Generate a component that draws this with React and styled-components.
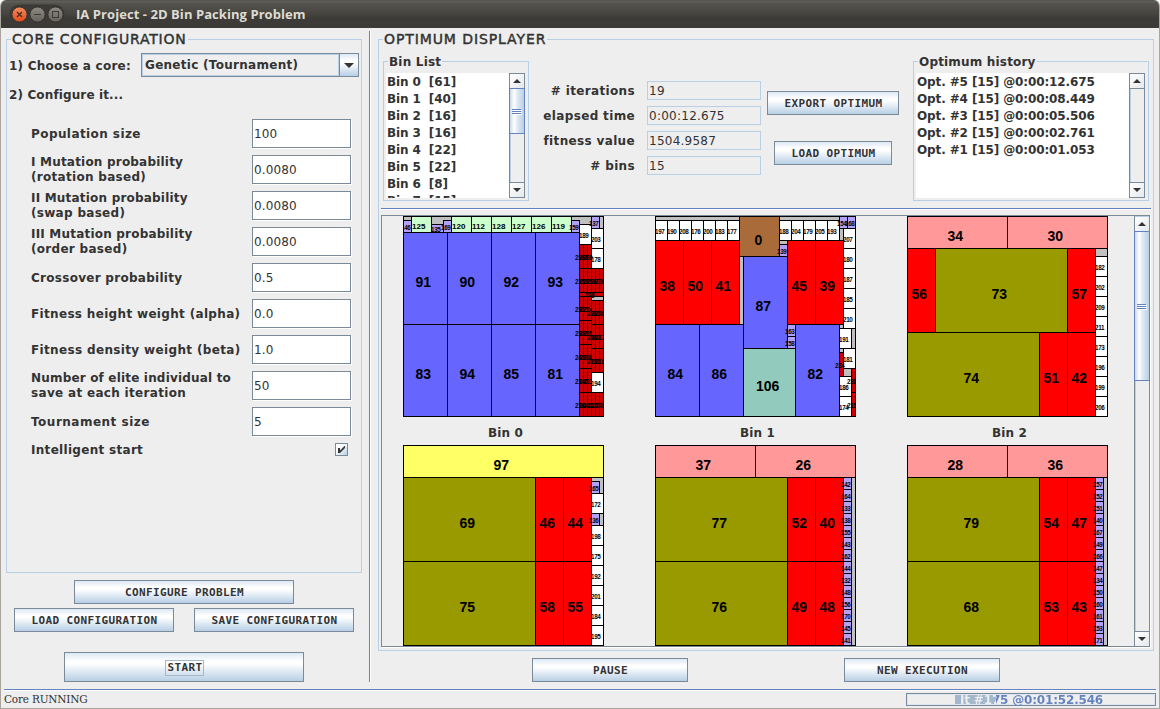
import React from "react";
import styled, { createGlobalStyle, css } from "styled-components";

const C = {
  bg: "#eeeeee",
  ink: "#333333",
  group: "#b8cfe5",
  edge: "#7a8a99",
  blue: "#6382bf",
};

const Global = createGlobalStyle`
  *, *::before, *::after { box-sizing: border-box; }
  html, body { margin: 0; padding: 0; background: #fff; }
  body { font-family: "DejaVu Sans", sans-serif; font-size: 12px; color: ${C.ink}; overflow: hidden; }
`;

const Window = styled.div`
  width: 1160px;
  height: 709px;
  display: flex;
  flex-direction: column;
  background: ${C.bg};
  border: 1px solid #aaa69f;
  border-top: 0;
  border-radius: 6px 6px 0 0;
  overflow: hidden;
`;

const TitleBar = styled.header`
  height: 28px;
  flex: none;
  margin: 0 -1px;
  padding-left: 9px;
  display: flex;
  align-items: center;
  background: linear-gradient(#4a4944 0, #63625c 1px, #55544e 3px, #45443f 14px, #3c3b37 18px, #3c3b37 100%);
`;

const Title = styled.h1`
  margin: 0 0 1px 10px;
  font: bold 13px/18px "Open Sans", "Noto Sans", sans-serif;
  letter-spacing: 0.06px;
  color: #dfdbd2;
`;

const Body = styled.div`
  display: flex;
  height: 661px;
  flex: none;
`;

const LeftPane = styled.section`
  width: 368px;
  padding: 4px 7px 0 5px;
  display: flex;
  flex-direction: column;
`;

const Divider = styled.div`
  width: 2px;
  height: 651px;
  margin-top: 3px;
  background: ${C.blue};
  border-right: 1px solid #fff;
`;

const RightPane = styled.section`
  padding: 4px 0 0 7px;
  flex: 1;
`;

const Group = styled.fieldset`
  margin: 0;
  padding: 0;
  min-width: 0;
  border: 1px solid ${C.group};
  width: ${(p) => p.$w}px;
  height: ${(p) => p.$h}px;
`;

const Legend = styled.legend`
  height: 15px;
  line-height: 16px;
  margin-left: 4px;
  padding: 0 1px;
  white-space: nowrap;
  letter-spacing: ${(p) => p.$ls || "0.2px"};
  ${(p) =>
    p.$big
      ? css`
          font-size: 14px;
          line-height: 15px;
          -webkit-text-stroke: 0.45px ${C.ink};
        `
      : css`
          font-size: 12px;
          font-weight: bold;
        `}
`;

const Label = styled.span`
  font-weight: bold;
  font-size: 12px;
  line-height: 15px;
  padding-top: 2px;
  letter-spacing: ${(p) => (p.$ls === undefined ? 0.35 : p.$ls)}px;
  white-space: nowrap;
`;

const LabelLines = styled.div`
  display: flex;
  flex-direction: column;

  ${Label} {
    padding-top: 0;
  }

  ${Label}:only-child {
    padding-top: 2px;
  }
`;

const CoreRow = styled.div`
  display: flex;
  align-items: center;
  margin-top: 6px;
  padding-left: 2px;
  height: 24px;
`;

const Combo = styled.div`
  display: flex;
  width: 218px;
  height: 24px;
  margin-left: auto;
  margin-right: 2px;
  border: 1px solid ${C.edge};
`;

const ComboText = styled.div`
  flex: 1;
  padding-left: 2px;
  border: 1px solid ${C.group};
  line-height: 21px;
  font-weight: bold;
  letter-spacing: 0.28px;
`;

const ComboArrow = styled.div`
  width: 19px;
  border-left: 1px solid ${C.edge};
  display: flex;
  align-items: center;
  justify-content: center;
  background: linear-gradient(#dde8f3, #ffffff 30%, #ffffff 40%, #b8cfe5);
`;

const StepLine = styled.div`
  margin: 9px 0 0 2px;
  height: 16px;
  display: flex;
`;

const Form = styled.div`
  margin: 17px 10px 0 24px;
  display: flex;
  flex-direction: column;
  gap: 7px;
`;

const FormRow = styled.div`
  display: flex;
  align-items: center;
  justify-content: space-between;
  height: ${(p) => (p.$short ? 13 : 29)}px;
`;

const Field = styled.div`
  width: 99px;
  height: 29px;
  padding-left: 1px;
  background: #fff;
  border: 1px solid ${C.edge};
  box-shadow: 1px 1px 0 #fff;
  line-height: 29px;
  letter-spacing: 0.15px;
`;

const Check = styled.div`
  width: 13px;
  height: 13px;
  margin-right: 3px;
  border: 1px solid ${C.edge};
  background: linear-gradient(135deg, #fff 30%, #b8cfe5);
`;

const Button = styled.button`
  appearance: none;
  padding: 2px 0 0 1px;
  margin: 0;
  flex: none;
  border-radius: 0;
  width: ${(p) => p.$w}px;
  height: ${(p) => p.$h || 24}px;
  border: 1px solid ${C.edge};
  background: linear-gradient(#dde8f3, #ffffff 30%, #ffffff 38%, #b8cfe5);
  color: ${C.ink};
  font: bold 11px/14px "DejaVu Sans Mono", monospace;
  letter-spacing: 0.38px;
  display: flex;
  align-items: center;
  justify-content: center;
`;

const Focus = styled.span`
  border: 1px solid #a3b8cc;
  margin-top: -1px;
  padding: 0 0 0 1px;
`;

const ButtonRow = styled.div`
  display: flex;
  justify-content: center;
  gap: ${(p) => p.$gap || 20}px;
  margin-top: ${(p) => p.$mt}px;
  margin-right: ${(p) => p.$mr || 0}px;
`;

const TopArea = styled.div`
  display: flex;
  height: 161px;
  padding: 7px 0 0 4px;
`;

const ListBox = styled.div`
  display: flex;
  height: 125px;
  margin: 4px 3px 0 2px;
`;

const List = styled.ul`
  flex: 1;
  margin: 0;
  padding: 1px 0 0 1px;
  list-style: none;
  overflow: hidden;
  background: #fff;
`;

const Item = styled.li`
  height: 17px;
  line-height: 17px;
  font-weight: bold;
  white-space: pre;
  letter-spacing: -0.12px;
`;

const Bar = styled.div`
  width: 16px;
  display: flex;
  flex-direction: column;
  border: 1px solid ${C.edge};
  background: ${C.bg};
  box-shadow: inset 1px 1px 0 ${C.group};
  ${(p) =>
    p.$flush &&
    css`
      width: 15px;
      padding-top: 1px;
      border-width: 0 0 0 1px;
    `}
`;

const BarButton = styled.div`
  height: 15px;
  flex: none;
  display: flex;
  align-items: center;
  justify-content: center;
  background: linear-gradient(135deg, #fff, #e4e8ec);
  ${(p) =>
    p.$down
      ? css`
          border-top: 1px solid ${C.edge};
          margin-top: auto;
        `
      : css`
          border-bottom: 1px solid ${C.edge};
        `}
`;

const Thumb = styled.div`
  height: ${(p) => p.$h}px;
  margin: -1px -1px 0;
  flex: none;
  display: flex;
  align-items: center;
  justify-content: center;
  padding-top: 2px;
  border: 1px solid ${C.blue};
  background: linear-gradient(90deg, #c8d9ea, #ffffff 30%, #dde8f3 55%, #b8cfe5);
`;

const Stats = styled.div`
  width: 232px;
  margin-top: 27px;
  display: flex;
  flex-direction: column;
  gap: 6px;
`;

const StatRow = styled.div`
  display: flex;
  align-items: center;
  justify-content: flex-end;
  gap: 12px;
  height: 19px;
`;

const StatValue = styled.div`
  width: 114px;
  height: 19px;
  border: 1px solid ${C.group};
  padding-left: 1px;
  line-height: 19px;
  letter-spacing: 0.25px;
`;

const Actions = styled.div`
  width: 132px;
  margin: 37px 14px 0 6px;
  display: flex;
  flex-direction: column;
  align-items: center;
  gap: 26px;
`;

const HLine = styled.div`
  height: 2px;
  margin: ${(p) => p.$m || "0"};
  background: ${C.blue};
  border-bottom: 1px solid #fff;
`;

const Scroll = styled.div`
  display: flex;
  width: 769px;
  height: 432px;
  margin: 5px 0 0 2px;
  border: 1px solid ${C.edge};
  box-shadow: 1px 1px 0 #fff;
`;

const Bins = styled.div`
  flex: 1;
  height: 430px;
  overflow: hidden;
  padding-left: 21px;
  display: grid;
  grid-template-columns: repeat(3, 252px);
  grid-auto-rows: 229px;
`;

const Bin = styled.figure`
  margin: 0;
  width: 201px;
  display: flex;
  flex-direction: column;
`;

const Caption = styled.figcaption`
  height: 28px;
  padding-left: 4px;
  line-height: 32px;
  text-align: center;
  font-weight: bold;
  letter-spacing: 0.15px;
`;

const Footer = styled.footer`
  flex: 1;
  display: flex;
  justify-content: space-between;
  padding: 2px 3px 0 3px;
`;

const Status = styled.span`
  font: 10.5px/12px "DejaVu Serif", serif;
  letter-spacing: -0.2px;
`;

const Progress = styled.div`
  width: 250px;
  height: 13px;
  border: 1px solid ${C.edge};
  box-shadow: inset 0 0 0 1px #dce6f0;
  background: linear-gradient(90deg, transparent 48px, #a3b8cc 48px, #a3b8cc 89px, transparent 89px);
`;

const ProgressText = styled.div`
  margin-left: 53px;
  line-height: 12px;
  font-weight: bold;
  white-space: nowrap;
  letter-spacing: -0.18px;
  color: transparent;
  background: linear-gradient(90deg, #eeeeee 36px, ${C.blue} 36px);
  background-clip: text;
  -webkit-background-clip: text;
`;

const FILL = {
  blue: "#6666ff",
  green: "#ccffcc",
  purple: "#b1a1f8",
  white: "#ffffff",
  dark: "#cc0000",
  red: "#ff0000",
  brown: "#a96b39",
  teal: "#92cbbe",
  pink: "#ff9999",
  olive: "#999900",
  yellow: "#ffff66",
};

/* Each piece: [label, colour, x, y, width, height] in bin units of 4px. */
const run = (labels, color, x, y, w, h, dx, dy) =>
  labels.map((l, i) => [l, color, x + i * dx, y + i * dy, w, h]);

const slivers = (labels, x, y) => run(labels, "dark", x, y, 1, 6, 1, 0);

const BINS = [
  [
    [146, "purple", 0, 1, 2, 3],
    [125, "green", 2, 0, 5, 4],
    [135, "purple", 7, 2, 3, 2],
    [169, "purple", 10, 1, 2, 3],
    ...run([120, 112, 128, 127, 126, 119], "green", 12, 0, 5, 4, 5, 0),
    [159, "purple", 42, 1, 2, 3],
    [189, "white", 44, 2, 3, 5],
    [137, "purple", 47, 0, 2, 3],
    [203, "white", 47, 3, 3, 5],
    [178, "white", 47, 8, 3, 5],
    ...run([91, 90, 92, 93], "blue", 0, 4, 11, 23, 11, 0),
    ...run([83, 94, 85, 81], "blue", 0, 27, 11, 23, 11, 0),
    ...slivers([239, 238, 230], 44, 7),
    ...slivers([215, 218, 229], 44, 13),
    ...slivers([226, 227, 220], 47, 13),
    [236, "dark", 44, 19, 6, 1],
    ...slivers([233, 221, 224], 44, 20),
    ...slivers([228, 223, 248], 47, 21),
    ...slivers([232, 225, 235], 44, 26),
    ...slivers([240, 222, 217], 47, 27),
    ...slivers([243, 237, 246], 44, 32),
    ...slivers([213, 212, 219], 47, 33),
    ...slivers([214, 245, 231], 44, 38),
    [194, "white", 47, 39, 3, 5],
    ...slivers([216, 244, 242], 44, 44),
    ...slivers([241, 247, 249], 47, 44),
  ],
  [
    ...run([197, 190, 208, 176, 200, 183, 177], "white", 0, 1, 3, 5, 3, 0),
    ...run([188, 204, 179, 205, 193], "white", 31, 1, 3, 5, 3, 0),
    [0, "brown", 21, 0, 10, 10],
    [154, "purple", 46, 0, 2, 3],
    [168, "purple", 48, 0, 2, 3],
    ...run([38, 50, 41], "red", 0, 6, 7, 21, 7, 0),
    ...run([45, 39], "red", 33, 6, 7, 21, 7, 0),
    ...run([207, 180, 187, 185, 210], "white", 47, 3, 3, 5, 0, 5),
    [139, "purple", 31, 7, 2, 3],
    [87, "blue", 22, 10, 11, 23],
    [163, "purple", 33, 27, 2, 3],
    [158, "purple", 33, 30, 2, 3],
    [84, "blue", 0, 27, 11, 23],
    [86, "blue", 11, 27, 11, 23],
    [106, "teal", 22, 33, 13, 17],
    [82, "blue", 35, 27, 11, 23],
    [191, "white", 46, 28, 3, 5],
    [181, "white", 47, 33, 3, 5],
    [234, "dark", 46, 34, 1, 6],
    [186, "white", 46, 40, 3, 5],
    [174, "white", 46, 45, 3, 5],
    [238, "dark", 49, 38, 1, 6],
    [215, "dark", 49, 44, 1, 6],
  ],
  [
    ...run([34, 30], "pink", 0, 0, 25, 8, 25, 0),
    [56, "red", 0, 8, 7, 21],
    [73, "olive", 7, 8, 33, 21],
    [57, "red", 40, 8, 7, 21],
    [74, "olive", 0, 29, 33, 21],
    ...run([51, 42], "red", 33, 29, 7, 21, 7, 0),
    ...run([182, 202, 209, 211, 173, 196, 199, 206], "white", 47, 10, 3, 5, 0, 5),
  ],
  [
    [97, "yellow", 0, 0, 50, 8],
    [69, "olive", 0, 8, 33, 21],
    ...run([46, 44], "red", 33, 8, 7, 21, 7, 0),
    [75, "olive", 0, 29, 33, 21],
    ...run([58, 55], "red", 33, 29, 7, 21, 7, 0),
    [165, "purple", 47, 9, 2, 3],
    [172, "white", 47, 12, 3, 5],
    [136, "purple", 47, 17, 2, 3],
    ...run([198, 175, 192, 201, 184, 195], "white", 47, 20, 3, 5, 0, 5),
  ],
  [
    ...run([37, 26], "pink", 0, 0, 25, 8, 25, 0),
    [77, "olive", 0, 8, 33, 21],
    ...run([52, 40], "red", 33, 8, 7, 21, 7, 0),
    [76, "olive", 0, 29, 33, 21],
    ...run([49, 48], "red", 33, 29, 7, 21, 7, 0),
    ...run([142, 164, 133, 138, 155, 143, 162, 144, 132, 148, 156, 170, 145, 141], "purple", 47, 8, 2, 3, 0, 3),
  ],
  [
    ...run([28, 36], "pink", 0, 0, 25, 8, 25, 0),
    [79, "olive", 0, 8, 33, 21],
    ...run([54, 47], "red", 33, 8, 7, 21, 7, 0),
    [68, "olive", 0, 29, 33, 21],
    ...run([53, 43], "red", 33, 29, 7, 21, 7, 0),
    ...run([157, 152, 151, 140, 167, 149, 166, 147, 134, 150, 160, 161, 153, 171], "purple", 47, 8, 2, 3, 0, 3),
  ],
];

const BinSvg = styled.svg`
  display: block;
  overflow: hidden;
  font-family: "Liberation Sans", Arial, sans-serif;
  font-weight: bold;
`;

const PieceText = styled.text`
  fill: #000;
  font-size: ${(p) => p.$size}px;
  letter-spacing: ${(p) => (p.$size < 7 ? "-0.35px" : "0")};
`;

function Piece({ piece: [label, color, x, y, w, h] }) {
  const cx = (x + w / 2) * 4;
  const cy = (y + h / 2) * 4;
  const n = String(label).length;
  let size = 14;
  let tx = cx - (n === 1 ? 4.6 : 1.2 + n * 4.2) + (n === 3 ? 0.7 : 0);
  let ty = cy + 9;
  if (color === "green") {
    size = 8;
    tx = cx - 9;
    ty = cy + 4.5;
  } else if (["purple", "white", "dark"].includes(color)) {
    size = 6.3;
    tx = cx - 6;
    ty = cy + 4;
  }
  return (
    <g>
      <rect x={x * 4 + 0.5} y={y * 4 + 0.5} width={w * 4} height={h * 4} fill={FILL[color]} stroke="#000" />
      <PieceText x={tx} y={ty} $size={size}>
        {label}
      </PieceText>
    </g>
  );
}

function BinView({ pieces, index }) {
  return (
    <Bin>
      <BinSvg width="201" height="201" viewBox="0 0 201 201">
        <rect x="0.5" y="0.5" width="200" height="200" fill="#c0c0c0" stroke="#000" />
        {pieces.map((p, i) => (
          <Piece key={i} piece={p} />
        ))}
      </BinSvg>
      <Caption>Bin {index}</Caption>
    </Bin>
  );
}

const Arrow = ({ down, big }) => {
  const w = big ? 10 : 8;
  const h = w / 2;
  return (
    <svg width={w} height={h} viewBox="0 0 8 4">
      <path d={down ? "M0 0H8L4 4Z" : "M4 0L8 4H0Z"} fill={C.ink} />
    </svg>
  );
};

const Grip = () => (
  <svg width="10" height="7" viewBox="0 0 10 7" shapeRendering="crispEdges">
    <path d="M0 .5H9M0 2.5H9M0 4.5H9" stroke={C.blue} />
    <path d="M1 1.5H10M1 3.5H10M1 5.5H10" stroke="#fff" />
  </svg>
);

function ScrollBar({ thumb, flush }) {
  return (
    <Bar $flush={flush}>
      <BarButton>
        <Arrow />
      </BarButton>
      {thumb && (
        <Thumb $h={thumb}>
          <Grip />
        </Thumb>
      )}
      <BarButton $down>
        <Arrow down />
      </BarButton>
    </Bar>
  );
}

function WindowButtons() {
  return (
    <svg width="57" height="22" viewBox="0 0 57 22">
      <defs>
        <linearGradient id="close" x1="0" y1="0" x2="0" y2="1">
          <stop offset="0" stopColor="#f58c63" />
          <stop offset="1" stopColor="#df4b16" />
        </linearGradient>
        <linearGradient id="plain" x1="0" y1="0" x2="0" y2="1">
          <stop offset="0" stopColor="#8d8b83" />
          <stop offset="1" stopColor="#64625b" />
        </linearGradient>
      </defs>
      <rect x="0.5" y="1.5" width="55" height="19" rx="9.5" fill="#3b3a36" />
      <circle cx="10.5" cy="11.5" r="7.6" fill="url(#close)" stroke="#33322e" />
      <circle cx="28.5" cy="11.5" r="7.6" fill="url(#plain)" stroke="#33322e" />
      <circle cx="46.5" cy="11.5" r="7.6" fill="url(#plain)" stroke="#33322e" />
      <path d="M8 9L13 14M13 9L8 14" stroke="#4b2a1c" strokeWidth="1.3" />
      <path d="M25 11.5H32" stroke="#3c3b37" />
      <rect x="43.5" y="8.5" width="6" height="6" fill="none" stroke="#3c3b37" />
    </svg>
  );
}

/* Each parameter: label lines as [text, letter spacing], then the value. */
const PARAMS = [
  [[["Population size", 0.42]], "100"],
  [[["I Mutation probability", 0.2], ["(rotation based)", 0.3]], "0.0080"],
  [[["II Mutation probability", 0.2], ["(swap based)", 0.3]], "0.0080"],
  [[["III Mutation probability", 0.2], ["(order based)", 0.3]], "0.0080"],
  [[["Crossover probability", 0.28]], "0.5"],
  [[["Fitness height weight (alpha)", 0.33]], "0.0"],
  [[["Fitness density weight (beta)", 0.35]], "1.0"],
  [[["Number of elite individual to", 0.18], ["save at each iteration", 0.32]], "50"],
  [[["Tournament size", 0.5]], "5"],
];

const BIN_COUNTS = [61, 40, 16, 16, 22, 22, 8, 15];

const STATS = [
  ["# iterations", "19"],
  ["elapsed time", "0:00:12.675"],
  ["fitness value", "1504.9587"],
  ["# bins", "15"],
];

const HISTORY = [
  "Opt. #5 [15] @0:00:12.675",
  "Opt. #4 [15] @0:00:08.449",
  "Opt. #3 [15] @0:00:05.506",
  "Opt. #2 [15] @0:00:02.761",
  "Opt. #1 [15] @0:00:01.053",
];

export default function App() {
  return (
    <>
      <Global />
      <Window>
        <TitleBar>
          <WindowButtons />
          <Title>IA Project - 2D Bin Packing Problem</Title>
        </TitleBar>
        <Body>
          <LeftPane>
            <Group $w={356} $h={541}>
              <Legend $big $ls="0.8px">CORE CONFIGURATION</Legend>
              <CoreRow>
                <Label $ls={0.25}>1) Choose a core:</Label>
                <Combo>
                  <ComboText>Genetic (Tournament)</ComboText>
                  <ComboArrow>
                    <Arrow down big />
                  </ComboArrow>
                </Combo>
              </CoreRow>
              <StepLine>
                <Label $ls={0.13}>2) Configure it...</Label>
              </StepLine>
              <Form>
                {PARAMS.map(([lines, value]) => (
                  <FormRow key={lines[0][0]}>
                    <LabelLines>
                      {lines.map(([text, ls]) => (
                        <Label key={text} $ls={ls}>
                          {text}
                        </Label>
                      ))}
                    </LabelLines>
                    <Field>{value}</Field>
                  </FormRow>
                ))}
                <FormRow $short>
                  <Label $ls={0.3}>Intelligent start</Label>
                  <Check>
                    <svg width="11" height="11" viewBox="0 0 11 11">
                      <path d="M2 4H4V6.5L8.5 2H9V4L4 9H2Z" fill={C.ink} />
                    </svg>
                  </Check>
                </FormRow>
              </Form>
            </Group>
            <ButtonRow $mt={7}>
              <Button $w={220}>CONFIGURE PROBLEM</Button>
            </ButtonRow>
            <ButtonRow $mt={4}>
              <Button $w={160}>LOAD CONFIGURATION</Button>
              <Button $w={160}>SAVE CONFIGURATION</Button>
            </ButtonRow>
            <ButtonRow $mt={20}>
              <Button $w={240} $h={30}>
                <Focus>START</Focus>
              </Button>
            </ButtonRow>
          </LeftPane>
          <Divider />
          <RightPane>
            <Group $w={776} $h={619}>
              <Legend $big $ls="0.9px">OPTIMUM DISPLAYER</Legend>
              <TopArea>
                <Group $w={146} $h={147}>
                  <Legend>Bin List</Legend>
                  <ListBox>
                    <List>
                      {BIN_COUNTS.map((n, i) => (
                        <Item key={i}>{`Bin ${i}  [${n}]`}</Item>
                      ))}
                    </List>
                    <ScrollBar thumb={46} />
                  </ListBox>
                </Group>
                <Stats>
                  {STATS.map(([label, value]) => (
                    <StatRow key={label}>
                      <Label>{label}</Label>
                      <StatValue>{value}</StatValue>
                    </StatRow>
                  ))}
                </Stats>
                <Actions>
                  <Button $w={132}>EXPORT OPTIMUM</Button>
                  <Button $w={118}>LOAD OPTIMUM</Button>
                </Actions>
                <Group $w={236} $h={147}>
                  <Legend $ls="0.18px">Optimum history</Legend>
                  <ListBox>
                    <List>
                      {HISTORY.map((h) => (
                        <Item key={h}>{h}</Item>
                      ))}
                    </List>
                    <ScrollBar />
                  </ListBox>
                </Group>
              </TopArea>
              <HLine $m="0 2px" />
              <Scroll>
                <Bins>
                  {BINS.map((pieces, i) => (
                    <BinView key={i} pieces={pieces} index={i} />
                  ))}
                </Bins>
                <ScrollBar thumb={150} flush />
              </Scroll>
            </Group>
            <ButtonRow $mt={7} $gap={156} $mr={5}>
              <Button $w={156}>PAUSE</Button>
              <Button $w={156}>NEW EXECUTION</Button>
            </ButtonRow>
          </RightPane>
        </Body>
        <HLine $m="0 3px" />
        <Footer>
          <Status>Core RUNNING</Status>
          <Progress>
            <ProgressText>It #175 @0:01:52.546</ProgressText>
          </Progress>
        </Footer>
      </Window>
    </>
  );
}
